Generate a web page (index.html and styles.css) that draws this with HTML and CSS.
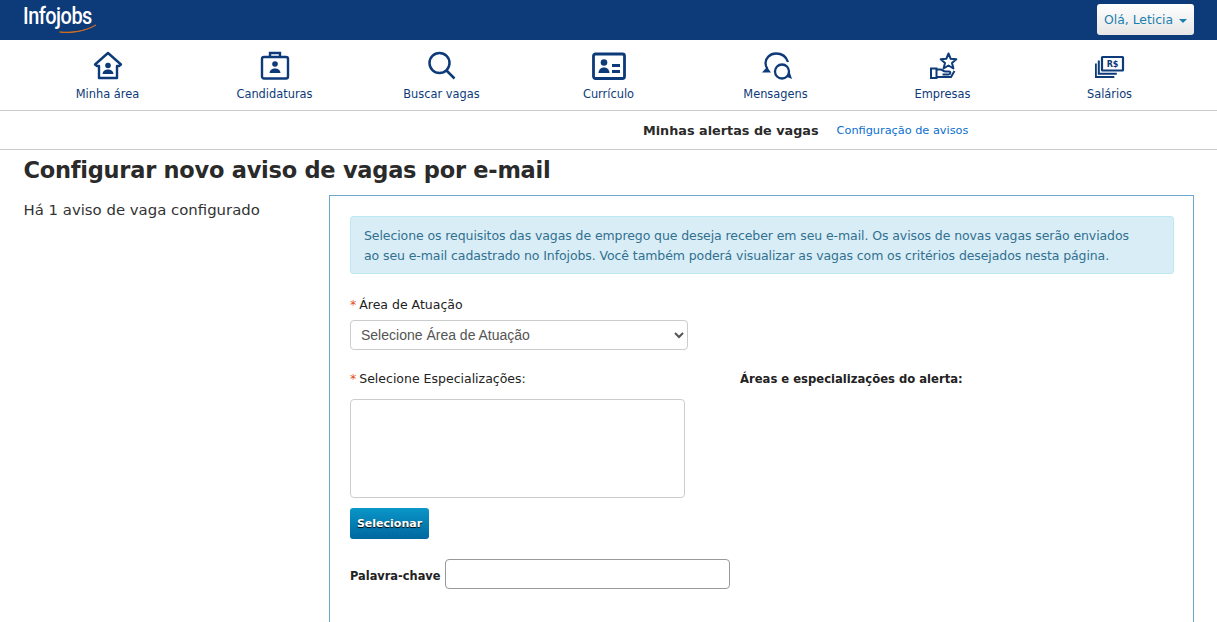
FILE: index.html
```html
<!DOCTYPE html>
<html lang="pt-BR">
<head>
<meta charset="utf-8">
<title>Infojobs</title>
<link rel="stylesheet" href="styles.css">
</head>
<body>
<header class="topbar">
  <a class="logo">
    <span class="logo-text">Infojobs</span>
    <svg class="logo-swoosh" width="38" height="10" viewBox="0 0 38 10"><path d="M0.500 8C13 10 26 7 37 1 26 7.600 13 8.600 0.500 8z" fill="#e8731a" stroke="#e8731a" stroke-width="0.700"/></svg>
  </a>
  <button class="user-btn">Olá, Leticia <span class="caret"></span></button>
</header>
<nav class="mainnav">
  <a class="nav-item">
    <svg class="nav-icon" width="30" height="30" viewBox="0 0 30 30" fill="none" stroke="#0d3a78" stroke-width="2.400"><path d="M2 13.500 15 2l13 11.500-2 1.500h-2v12H6V15H4z" stroke-linejoin="round"/><circle cx="15" cy="14.500" r="2.800" fill="#0d3a78" stroke="none"/><path d="M9.500 23c.5-3.500 3-4.500 5.500-4.500s5 1 5.500 4.500z" fill="#0d3a78" stroke="none"/></svg>
    <span>Minha área</span>
  </a>
  <a class="nav-item">
    <svg class="nav-icon" width="30" height="30" viewBox="0 0 30 30" fill="none" stroke="#0d3a78" stroke-width="2.400"><rect x="2" y="6" width="26" height="21.500" rx="2"/><path d="M10 5V2h10v3"/><circle cx="15" cy="13" r="2.800" fill="#0d3a78" stroke="none"/><path d="M9.500 22c.5-3.500 3-4.500 5.500-4.500s5 1 5.500 4.500z" fill="#0d3a78" stroke="none"/></svg>
    <span>Candidaturas</span>
  </a>
  <a class="nav-item">
    <svg class="nav-icon" width="30" height="30" viewBox="0 0 30 30" fill="none" stroke="#0d3a78" stroke-width="2.500"><circle cx="12.500" cy="12" r="10"/><path d="M19.500 19.500 27.500 27.500"/></svg>
    <span>Buscar vagas</span>
  </a>
  <a class="nav-item">
    <svg class="nav-icon" width="34" height="30" viewBox="0 0 34 30" fill="none"><rect x="1.500" y="3" width="31" height="24.500" rx="2" stroke="#0d3a78" stroke-width="2.800"/><circle cx="12" cy="11.500" r="3.300" fill="#0d3a78"/><path d="M6.500 22c.3-4 2.800-5.500 5.500-5.500s5.200 1.500 5.500 5.500z" fill="#0d3a78"/><path d="M20 13h8v3h-8zM20 19h8v3h-8z" fill="#0d3a78"/></svg>
    <span>Currículo</span>
  </a>
  <a class="nav-item">
    <svg class="nav-icon" width="32" height="30" viewBox="0 0 32 30" fill="none" stroke="#0d3a78" stroke-width="2.300"><path d="M28 11C26 5 21 2.500 16 2.500 9.500 2.500 5.500 7.500 5.500 12c0 2.500 1 4.500 2 6"/><path d="M2 21.500 7 16l4 5.500z" fill="#0d3a78" stroke="none"/><circle cx="22" cy="20.500" r="7"/><path d="M26 25.500 32 28l-2.500-7.500z" fill="#0d3a78" stroke="none"/></svg>
    <span>Mensagens</span>
  </a>
  <a class="nav-item">
    <svg class="nav-icon" width="30" height="30" viewBox="0 0 30 30" fill="none" stroke="#0d3a78" stroke-width="2"><path d="M20.500 2.500 22.700 7.800 28.300 8.200 24 11.900 25.400 17.500 20.500 14.500 15.600 17.500 17 11.900 12.700 8.200 18.300 7.800z" stroke-linejoin="round"/><path d="M3 17.500h5.500v9.500H3z"/><path d="M8.500 18.500h4c2 0 2.500 2 5 2h3.500c1.800 0 1.800 3-.5 3h-6M8.500 26h14.500l3.500-6"/></svg>
    <span>Empresas</span>
  </a>
  <a class="nav-item">
    <svg class="nav-icon" width="30" height="30" viewBox="0 0 30 30" fill="none" stroke="#0d3a78"><rect x="7" y="6" width="21" height="13.500" rx="0.500" stroke-width="2.200"/><path d="M3.800 9.500v13.200h18M0.800 12.500v13.500h18.500" stroke-width="2"/><text class="money" x="17.500" y="16" text-anchor="middle">R$</text></svg>
    <span>Salários</span>
  </a>
</nav>
<div class="subnav">
  <strong class="subnav-title">Minhas alertas de vagas</strong>
  <a class="subnav-link">Configuração de avisos</a>
</div>
<main class="page">
  <h1 class="page-title">Configurar novo aviso de vagas por e-mail</h1>
  <div class="columns">
    <aside class="side">Há 1 aviso de vaga configurado</aside>
    <section class="panel">
      <div class="notice">Selecione os requisitos das vagas de emprego que deseja receber em seu e-mail. Os avisos de novas vagas serão enviados<br>ao seu e-mail cadastrado no Infojobs. Você também poderá visualizar as vagas com os critérios desejados nesta página.</div>
      <label class="field-label"><span class="req">*</span> Área de Atuação</label>
      <select class="select"><option>Selecione Área de Atuação</option></select>
      <div class="spec-row">
        <div class="spec-left">
          <label class="field-label"><span class="req">*</span> Selecione Especializações:</label>
          <div class="listbox"></div>
          <button class="primary">Selecionar</button>
        </div>
        <strong class="spec-title">Áreas e especializações do alerta:</strong>
      </div>
      <div class="keyword">
        <label class="keyword-label">Palavra-chave</label>
        <input class="keyword-input" type="text">
      </div>
    </section>
  </div>
</main>
</body>
</html>
```
FILE: styles.css
```css
* { box-sizing: border-box; }
html, body { margin: 0; padding: 0; height: 622px; overflow: hidden; }
body { font-family: "DejaVu Sans", sans-serif; color: #222; background: #fff; font-size: 13px; }
.topbar { height: 40px; background: #0d3a78; display: flex; justify-content: space-between; padding: 4px 23px 0 23px; }
.logo { position: relative; display: block; width: 80px; }
.logo-text { display: block; font-family: "Roboto", sans-serif; font-weight: 500; font-size: 24px; line-height: 24px; letter-spacing: -0.600px; color: #fff; transform: scaleX(.83); transform-origin: left; }
.logo-swoosh { position: absolute; left: 36px; top: 20px; }
.user-btn { width: 97px; height: 31px; border: 0; border-radius: 3px; background: linear-gradient(#fff, #e6e6e6); color: #1a7fae; font: 12.400px "DejaVu Sans", sans-serif; padding: 0; }
.caret { display: inline-block; width: 0; height: 0; margin-left: 2px; vertical-align: middle; border: 4px solid transparent; border-top-color: #1a7fae; border-bottom: 0; }
.mainnav { height: 71px; display: grid; grid-template-columns: repeat(7, 167px); padding: 11px 0 0 24px; border-bottom: 1px solid #ccc; }
.nav-item { display: flex; flex-direction: column; align-items: center; color: #0d3a78; font-size: 11.400px; line-height: 14px; }
.nav-icon { display: block; height: 30px; margin-bottom: 6px; }
.money { font: bold 8px "DejaVu Sans", sans-serif; fill: #0d3a78; stroke: none; }
.subnav { height: 39px; border-bottom: 1px solid #ccc; display: flex; align-items: center; padding-left: 643px; padding-top: 1px; }
.subnav-title { font-size: 12.800px; margin-right: 18px; color: #2a2a2a; }
.subnav-link { color: #0a6fd0; font-size: 11.300px; }
.page { padding: 0 24px 0 23.500px; }
.page-title { margin: 4px 0 9px; font-size: 22.500px; line-height: 32px; letter-spacing: -0.250px; font-weight: bold; color: #2a2a2a; }
.columns { display: flex; }
.side { flex: none; width: 305.500px; font-size: 14.900px; line-height: 20px; padding-top: 5px; color: #333; }
.panel { flex: none; width: 865px; height: 600px; border: 1px solid #6fa8cf; padding: 20px 19px 0 20px; }
.notice { background: #d9edf7; border: 1px solid #bce8f1; border-radius: 3px; padding: 9px 0 9px 13px; height: 58px; color: #31708f; font-size: 12.500px; letter-spacing: -0.090px; line-height: 20px; margin-bottom: 21px; white-space: nowrap; }
.field-label { display: block; font-size: 12.500px; line-height: 20px; color: #222; }
.req { color: #e0501e; margin-right: -1px; }
.select { display: block; width: 338px; height: 30px; margin-top: 5px; padding: 0 6px; border: 1px solid #ccc; border-radius: 4px; background: #fff; color: #555; font: 14px "Liberation Sans", sans-serif; }
.spec-row { display: flex; margin-top: 19px; }
.spec-left { width: 390px; }
.listbox { width: 335px; height: 99px; margin-top: 10px; border: 1px solid #ccc; border-radius: 4px; }
.primary { display: block; width: 79px; height: 31px; margin-top: 10px; border: 0; border-radius: 3px; background: linear-gradient(#0a96c8, #00679f); color: #fff; font: bold 11px "DejaVu Sans", sans-serif; text-shadow: 0 1px 1px #000; padding: 0; }
.spec-title { font-size: 11.600px; line-height: 20px; }
.keyword { display: flex; align-items: center; margin-top: 20px; }
.keyword-label { font-weight: bold; font-size: 11.400px; margin-right: 5px; padding-top: 4px; }
.keyword-input { width: 285px; height: 30px; border: 1px solid #999; border-radius: 4px; background: #fff; }
```
